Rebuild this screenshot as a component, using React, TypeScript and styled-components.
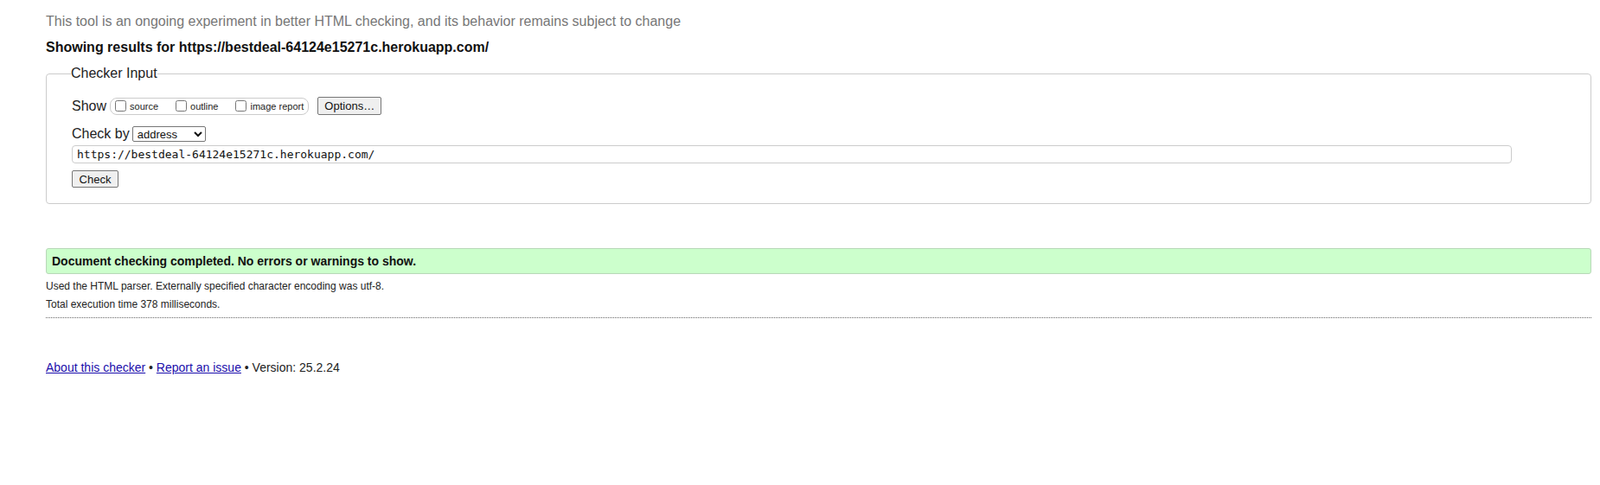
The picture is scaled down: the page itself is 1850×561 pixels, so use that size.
import React from 'react'
import styled, { createGlobalStyle } from 'styled-components'

const GlobalStyle = createGlobalStyle`
  html, body {
    margin: 0;
    padding: 0;
    background: #fff;
  }
  body {
    font-family: "Liberation Sans", Arial, sans-serif;
    color: #111;
  }
`

const Page = styled.div`
  padding: 15px 10px 40px 53px;
`

const Intro = styled.p`
  margin: 0;
  font-size: 16px;
  line-height: 20px;
  color: #777;
`

const ResultsFor = styled.h2`
  margin: 10px 0 0;
  font-size: 16px;
  line-height: 20px;
  font-weight: bold;
  color: #111;
`

const Fieldset = styled.fieldset`
  margin: 10px 0 0;
  padding: 4px 29px 18px 29px;
  border: 1px solid #ccc;
  border-radius: 4px;
`

const Legend = styled.legend`
  padding: 0;
  margin-left: -1px;
  font-size: 16px;
  line-height: 20px;
  color: #222;
`

const Row = styled.div<{ $gap?: number; $top: number }>`
  display: flex;
  align-items: center;
  gap: ${p => p.$gap ?? 4}px;
  margin-top: ${p => p.$top}px;
  font-size: 16px;
  line-height: 20px;
  color: #222;
`

const Pill = styled.span`
  display: inline-flex;
  align-items: center;
  gap: 20px;
  height: 18px;
  padding: 0 5px 0 5px;
  border: 1px solid #ccc;
  border-radius: 8px;
`

const CheckLabel = styled.label`
  display: inline-flex;
  align-items: flex-end;
  font-size: 11px;
  line-height: 13px;
  color: #222;

  input {
    margin: 0 4px 1px 0;
    width: 13px;
    height: 13px;
  }
`

const Button = styled.button<{ $w: number; $h: number }>`
  width: ${p => p.$w}px;
  height: ${p => p.$h}px;
  padding: 0;
  font-family: "Liberation Sans", Arial, sans-serif;
  font-size: 13px;
  color: #111;
  background: #efefef;
  border: 1px solid #767676;
  border-radius: 2px;
`

const Select = styled.select`
  width: 85px;
  height: 18px;
  padding: 0 1px;
  font-family: "Liberation Sans", Arial, sans-serif;
  font-size: 13px;
  color: #111;
  border: 1px solid #767676;
  border-radius: 2px;
  background: #fff;
`

const UrlInput = styled.input`
  display: block;
  box-sizing: border-box;
  width: calc(100% - 62px);
  height: 21px;
  margin: 3px 0 0;
  padding: 0 5px;
  font-family: "DejaVu Sans Mono", monospace;
  font-size: 13px;
  color: #111;
  border: 1px solid #ccc;
  border-radius: 4px;
  outline: none;
`

const Success = styled.p`
  margin: 51px 0 0;
  box-sizing: border-box;
  height: 30px;
  padding: 0 6px;
  display: flex;
  align-items: center;
  font-size: 14px;
  font-weight: bold;
  color: #111;
  background: #ccffcc;
  border: 1px solid #b8d8b8;
  border-radius: 3px;
`

const Details = styled.p<{ $top?: number }>`
  margin: ${p => p.$top ?? 0}px 0 0;
  font-size: 12px;
  line-height: 21px;
  color: #222;
`

const Rule = styled.hr`
  margin: 4px 0 0;
  border: 0;
  border-top: 1px dotted #666;
`

const Footer = styled.p`
  margin: 47px 0 0;
  font-size: 14px;
  line-height: 20px;
  color: #222;

  a {
    color: #1a0dab;
    text-decoration: underline;
  }
`

export default function App() {
  return (
    <>
      <GlobalStyle />
      <Page>
        <Intro>
          This tool is an ongoing experiment in better HTML checking, and its behavior remains subject to change
        </Intro>
        <ResultsFor>Showing results for https://bestdeal-64124e15271c.herokuapp.com/</ResultsFor>
        <Fieldset>
          <Legend>Checker Input</Legend>
          <Row $gap={4} $top={13}>
            <span>Show</span>
            <Pill>
              <CheckLabel><input type="checkbox" />source</CheckLabel>
              <CheckLabel><input type="checkbox" />outline</CheckLabel>
              <CheckLabel><input type="checkbox" />image report</CheckLabel>
            </Pill>
            <Button $w={74} $h={21} style={{ marginLeft: 6 }}>Options…</Button>
          </Row>
          <Row $gap={3} $top={12}>
            <span>Check by</span>
            <Select defaultValue="address">
              <option value="address">address</option>
              <option value="file">file upload</option>
              <option value="text">text input</option>
            </Select>
          </Row>
          <UrlInput defaultValue="https://bestdeal-64124e15271c.herokuapp.com/" />
          <Button $w={54} $h={20} style={{ marginTop: 8, display: 'block' }}>Check</Button>
        </Fieldset>
        <Success>Document checking completed. No errors or warnings to show.</Success>
        <Details $top={4}>Used the HTML parser. Externally specified character encoding was utf-8.</Details>
        <Details>Total execution time 378 milliseconds.</Details>
        <Rule />
        <Footer>
          <a href="#about">About this checker</a> • <a href="#issue">Report an issue</a> • Version: 25.2.24
        </Footer>
      </Page>
    </>
  )
}
